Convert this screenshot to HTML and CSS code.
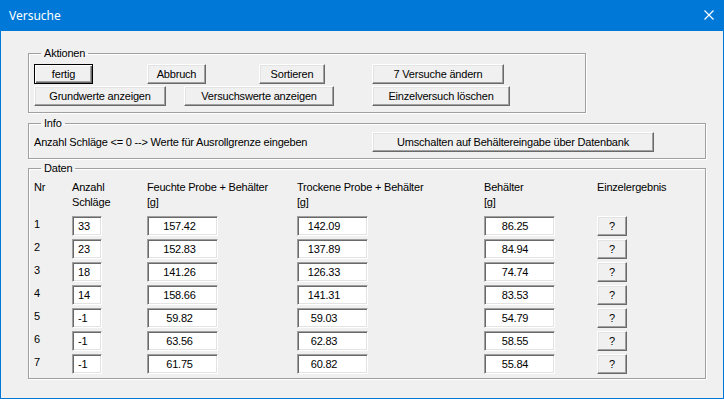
FILE: index.html
```html
<!DOCTYPE html>
<html lang="de">
<head>
    <meta charset="UTF-8">
    <title>Versuche</title>
    <link rel="stylesheet" href="styles.css">
</head>
<body>
    <div class="window">
        <div class="titlebar">
            <span class="title">Versuche</span>
            <svg class="close" width="10" height="10" viewBox="0 0 10 10">
                <path d="M0.5 0.5 L9.5 9.5 M9.5 0.5 L0.5 9.5" stroke="#fff" stroke-width="1.2" fill="none"/>
            </svg>
        </div>
        <div class="client">
            <fieldset class="group group-aktionen">
                <legend>Aktionen</legend>
                <div class="btn-row row-top">
                    <button class="btn btn-default w-fertig">fertig</button>
                    <button class="btn w-abbruch">Abbruch</button>
                    <button class="btn w-sortieren">Sortieren</button>
                    <button class="btn w-aendern">7 Versuche ändern</button>
                </div>
                <div class="btn-row row-bottom">
                    <button class="btn w-grund">Grundwerte anzeigen</button>
                    <button class="btn w-versuch">Versuchswerte anzeigen</button>
                    <button class="btn w-loeschen">Einzelversuch löschen</button>
                </div>
            </fieldset>

            <fieldset class="group group-info">
                <legend>Info</legend>
                <div class="info-row">
                    <span class="info-text">Anzahl Schläge &lt;= 0 --&gt; Werte für Ausrollgrenze eingeben</span>
                    <button class="btn w-umschalten">Umschalten auf Behältereingabe über Datenbank</button>
                </div>
            </fieldset>

            <fieldset class="group group-daten">
                <legend>Daten</legend>
                <div class="daten-grid" id="datenGrid">
                    <div class="head">Nr</div>
                    <div class="head">Anzahl<br>Schläge</div>
                    <div class="head">Feuchte Probe + Behälter<br>[g]</div>
                    <div class="head">Trockene Probe + Behälter<br>[g]</div>
                    <div class="head">Behälter<br>[g]</div>
                    <div class="head">Einzelergebnis</div>
                </div>
            </fieldset>
        </div>
    </div>

    <script>
        // Versuchsdaten: Nr, Schläge, feucht, trocken, Behälter
        const versuche = [
            [1, '33', '157.42', '142.09', '86.25'],
            [2, '23', '152.83', '137.89', '84.94'],
            [3, '18', '141.26', '126.33', '74.74'],
            [4, '14', '158.66', '141.31', '83.53'],
            [5, '-1', '59.82', '59.03', '54.79'],
            [6, '-1', '63.56', '62.83', '58.55'],
            [7, '-1', '61.75', '60.82', '55.84']
        ];

        const grid = document.getElementById('datenGrid');
        versuche.forEach(function(v, i) {
            let html = '<div class="nr">' + v[0] + '</div>';
            html += '<input class="field f-anzahl" type="text" value="' + v[1] + '">';
            html += '<input class="field f-feucht" type="text" value="' + v[2] + '">';
            html += '<input class="field f-trocken" type="text" value="' + v[3] + '">';
            html += '<input class="field f-behaelter" type="text" value="' + v[4] + '">';
            html += '<button class="btn w-frage">?</button>';
            grid.insertAdjacentHTML('beforeend', html);
        });
    </script>
</body>
</html>
```

FILE: styles.css
```css
html, body {
    margin: 0;
    padding: 0;
    background-color: #f0f0f0;
}
body {
    font-family: "Liberation Sans", Arial, sans-serif;
    font-size: 11px;
    letter-spacing: -0.2px;
    color: #000;
}
.window {
    width: 724px;
    height: 399px;
    box-sizing: border-box;
    border: 1px solid #0078d7;
    border-top: none;
    background-color: #f0f0f0;
}
.titlebar {
    height: 31px;
    background-color: #0078d7;
    display: flex;
    justify-content: space-between;
    align-items: flex-start;
}
.title {
    font-family: "Noto Sans", "Open Sans", sans-serif;
    font-size: 12px;
    letter-spacing: 0;
    line-height: 31px;
    color: #fff;
    padding-left: 8px;
}
.close {
    margin-top: 10px;
    margin-right: 9px;
}
.client {
    padding: 16px 0 0 27px;
}

/* Gruppen */
.group {
    margin: 0;
    box-sizing: border-box;
    border: 1px solid #a0a0a0;
    box-shadow: inset 1px 1px 0 #fff, 1px 1px 0 #fff;
    min-width: 0;
}
.group legend {
    padding: 0 3px;
    margin-left: 7px;
    line-height: 13px;
}
.group-aktionen {
    width: 558px;
    padding: 4px 5px 6px 5px;
}
.group-info {
    width: 678px;
    margin-top: 4px;
    padding: 2px 5px 6px 5px;
}
.group-daten {
    width: 678px;
    margin-top: 3px;
    padding: 5px 5px 4px 5px;
}

/* Buttons */
.btn {
    font-family: inherit;
    font-size: 11px;
    letter-spacing: inherit;
    color: #000;
    height: 20px;
    margin: 0;
    padding: 0;
    box-sizing: border-box;
    background-color: #f0f0f0;
    border: 1px solid;
    border-color: #fff #696969 #696969 #fff;
    box-shadow: inset -1px -1px 0 #a0a0a0, inset 1px 1px 0 #e3e3e3;
    border-radius: 0;
}
.btn-default {
    border-color: #000;
    box-shadow: inset 1px 1px 0 #fff, inset -1px -1px 0 #696969, inset -2px -2px 0 #a0a0a0;
}
.btn-row {
    display: grid;
    justify-items: start;
}
.row-top {
    grid-template-columns: 113px 112px 113px auto;
}
.row-bottom {
    margin-top: 2px;
    grid-template-columns: 150px 188px auto;
}
.w-fertig { width: 59px; }
.w-abbruch { width: 59px; }
.w-sortieren { width: 66px; }
.w-aendern { width: 132px; }
.w-grund { width: 132px; }
.w-versuch { width: 150px; }
.w-loeschen { width: 138px; }
.w-umschalten { width: 282px; }
.w-frage { width: 30px; }

/* Info */
.info-row {
    display: grid;
    grid-template-columns: 338px auto;
    align-items: start;
    justify-items: start;
}
.info-text {
    padding-top: 4px;
    line-height: 13px;
}

/* Daten */
.daten-grid {
    display: grid;
    grid-template-columns: 38px 75px 150px 187px 113px auto;
    row-gap: 3px;
    justify-items: start;
    align-items: start;
}
.head {
    line-height: 15px;
    margin-bottom: 3px;
}
.nr {
    padding-top: 2px;
    line-height: 13px;
}
.field {
    font-family: inherit;
    font-size: 11px;
    letter-spacing: inherit;
    color: #000;
    height: 20px;
    width: 71px;
    margin: 0;
    padding: 0;
    box-sizing: border-box;
    background-color: #fff;
    border: 1px solid;
    border-color: #a0a0a0 #fff #fff #a0a0a0;
    box-shadow: inset 1px 1px 0 #696969, inset -1px -1px 0 #e3e3e3;
    outline: none;
}
.f-anzahl {
    width: 30px;
    padding-left: 5px;
}
.f-feucht {
    text-align: center;
    padding-right: 6px;
}
.f-trocken {
    text-align: center;
    padding-right: 17px;
}
.f-behaelter {
    text-align: center;
    padding-right: 9px;
}
```
